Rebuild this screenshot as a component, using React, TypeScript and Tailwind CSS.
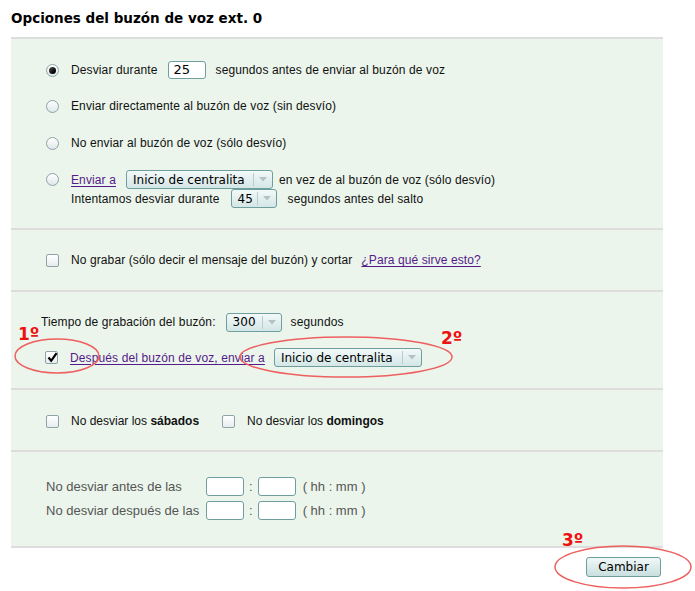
import React from "react";

const body = "font-['Liberation_Sans',Arial,sans-serif]";
const dv = "font-['DejaVu_Sans',sans-serif]";

function Radio({ checked }: { checked?: boolean }) {
  return (
    <span className="relative mr-[12px] flex h-[13px] w-[13px] shrink-0 items-center justify-center rounded-full border border-[#8ea3a8] bg-gradient-to-b from-[#ffffff] to-[#dfe7e9]">
      {checked && (
        <span className="h-[7px] w-[7px] rounded-full bg-gradient-to-br from-[#555] to-[#000]" />
      )}
    </span>
  );
}

function Check({ checked }: { checked?: boolean }) {
  return (
    <span className="relative mr-[12px] flex h-[13px] w-[13px] shrink-0 items-center justify-center rounded-[2px] border border-[#8ea3a8] bg-gradient-to-b from-[#ffffff] to-[#e6ecee]">
      {checked && (
        <svg width="11" height="11" viewBox="0 0 11 11" className="absolute left-[1px] top-[0px]">
          <path d="M1.5 5.5 L4.2 8.8 L9.6 1.2" fill="none" stroke="#000" strokeWidth="2.2" />
        </svg>
      )}
    </span>
  );
}

function Select({ value, className }: { value: string; className: string }) {
  return (
    <div
      className={`flex h-[19px] shrink-0 items-stretch rounded-[3px] border border-[#6e9e9e] bg-gradient-to-b from-[#f3f9f9] to-[#d4e6e6] ${dv} text-[12px] tracking-normal text-black ${className}`}
    >
      <span className="flex flex-1 items-center pl-[6px] leading-none">{value}</span>
      <span className="my-[2px] w-px bg-[#b7cccc]" />
      <span className="flex w-[18px] items-center justify-center">
        <svg width="8" height="5" viewBox="0 0 8 5">
          <path d="M0 0 H8 L4 4.5 Z" fill="#b3c3c3" />
        </svg>
      </span>
    </div>
  );
}

function TextBox({ value, className }: { value?: string; className: string }) {
  return (
    <div
      className={`flex shrink-0 items-center rounded-[3px] border border-[#6e9e9e] bg-white pl-[5px] ${dv} text-[13px] tracking-normal text-black ${className}`}
    >
      {value}
    </div>
  );
}

const section = "border-b-2 border-[#dddddd]";
const link = "text-[#551a8b] underline underline-offset-2";

export default function App() {
  return (
    <div className={`relative h-[591px] w-[695px] bg-white ${body} text-[12px] text-[#111]`}>
      <div className={`h-[37px] pl-[11px] pt-[10px] ${dv} text-[13.5px] font-bold leading-[16px] text-black`}>
        Opciones del buzón de voz ext. 0
      </div>

      <div className="ml-[11px] w-[652px] border-t-2 border-[#dddddd] bg-[#ebf5ec]">
        {/* redirect options */}
        <div className={`${section} pb-[20px] pl-[35px] pt-[21px] tracking-[0.12px]`}>
          <div className="flex h-[20px] items-center">
            <Radio checked />
            <span>Desviar durante</span>
            <TextBox value="25" className="ml-[10px] h-[18px] w-[38px]" />
            <span className="ml-[10px]">segundos antes de enviar al buzón de voz</span>
          </div>
          <div className="mt-[16px] flex h-[20px] items-center">
            <Radio />
            <span>Enviar directamente al buzón de voz (sin desvío)</span>
          </div>
          <div className="mt-[17px] flex h-[20px] items-center">
            <Radio />
            <span>No enviar al buzón de voz (sólo desvío)</span>
          </div>
          <div className="mt-[17px] flex items-start">
            <div className="flex h-[19px] items-center">
              <Radio />
            </div>
            <div className="flex flex-col">
              <div className="flex h-[19px] items-center">
                <span className={link}>Enviar a</span>
                <Select value="Inicio de centralita" className="ml-[10px] w-[147px]" />
                <span className="ml-[6px]">en vez de al buzón de voz (sólo desvío)</span>
              </div>
              <div className="flex h-[19px] items-center">
                <span>Intentamos desviar durante</span>
                <Select value="45" className="ml-[11px] w-[46px]" />
                <span className="ml-[11px]">segundos antes del salto</span>
              </div>
            </div>
          </div>
        </div>

        {/* no record */}
        <div className={`${section} pb-[20px] pl-[35px] pt-[20px] tracking-[0.1px]`}>
          <div className="flex h-[20px] items-center">
            <Check />
            <span>No grabar (sólo decir el mensaje del buzón) y cortar</span>
            <span className={`${link} ml-[9px]`}>¿Para qué sirve esto?</span>
          </div>
        </div>

        {/* recording time */}
        <div className={`${section} pb-[21px] pt-[21px] tracking-[0.12px]`}>
          <div className="flex h-[18px] items-center pl-[30px]">
            <span>Tiempo de grabación del buzón:</span>
            <Select value="300" className="ml-[10px] w-[56px]" />
            <span className="ml-[9px]">segundos</span>
          </div>
          <div className="mt-[17px] flex h-[19px] items-center pl-[34px]">
            <Check checked />
            <span className={link}>Después del buzón de voz, enviar a</span>
            <Select value="Inicio de centralita" className="ml-[9px] w-[148px]" />
          </div>
        </div>

        {/* weekend */}
        <div className={`${section} pb-[19px] pl-[35px] pt-[21px]`}>
          <div className="flex h-[20px] items-center">
            <Check />
            <span>
              No desviar los <b>sábados</b>
            </span>
            <span className="ml-[23px] flex items-center">
              <Check />
              <span>
                No desviar los <b>domingos</b>
              </span>
            </span>
          </div>
        </div>

        {/* hours */}
        <div className={`${section} pb-[26px] pl-[35px] pt-[25px] text-[13px] text-[#555]`}>
          <div className="flex h-[19px] items-center">
            <span className="w-[160px]">No desviar antes de las</span>
            <TextBox className="h-[19px] w-[38px]" />
            <span className="mx-[5px]">:</span>
            <TextBox className="h-[19px] w-[38px]" />
            <span className="ml-[7px]">( hh : mm )</span>
          </div>
          <div className="mt-[5px] flex h-[19px] items-center">
            <span className="w-[160px]">No desviar después de las</span>
            <TextBox className="h-[19px] w-[38px]" />
            <span className="mx-[5px]">:</span>
            <TextBox className="h-[19px] w-[38px]" />
            <span className="ml-[7px]">( hh : mm )</span>
          </div>
        </div>
      </div>

      <div className="flex w-[663px] justify-end pt-[9px] pr-[2px]">
        <button
          className={`flex h-[20px] w-[75px] items-center justify-center rounded-[3px] border border-[#6e9e9e] bg-gradient-to-b from-[#f1f8f8] to-[#c9dfdf] ${dv} text-[12px] text-black`}
        >
          Cambiar
        </button>
      </div>

      {/* hand-drawn annotations */}
      <svg className="pointer-events-none absolute left-0 top-0" width="695" height="591">
        <ellipse cx="57" cy="356" rx="42" ry="17" fill="none" stroke="#ee5f5f" strokeWidth="1.5" />
        <ellipse cx="346" cy="357" rx="106" ry="20" fill="none" stroke="#ee5f5f" strokeWidth="1.5" />
        <ellipse cx="623" cy="567" rx="68" ry="21" fill="none" stroke="#ee5f5f" strokeWidth="1.5" />
      </svg>
      <span className={`absolute left-[18px] top-[326px] ${dv} text-[17px] font-bold leading-none text-[#ee1111]`}>1º</span>
      <span className={`absolute left-[441px] top-[330px] ${dv} text-[17px] font-bold leading-none text-[#ee1111]`}>2º</span>
      <span className={`absolute left-[562px] top-[532px] ${dv} text-[17px] font-bold leading-none text-[#ee1111]`}>3º</span>
    </div>
  );
}
